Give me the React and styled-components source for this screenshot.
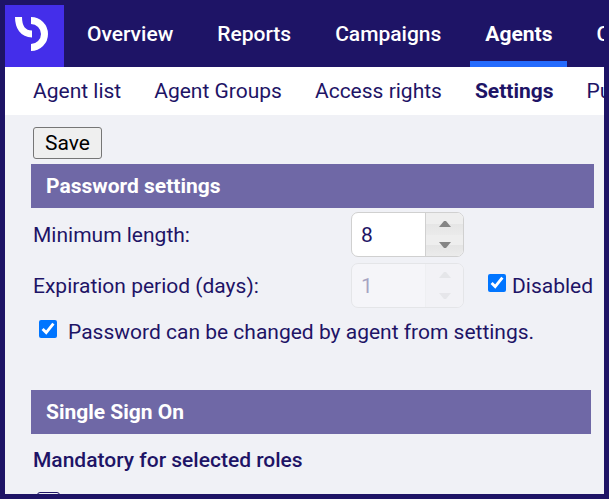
import React, { useState } from 'react';
import styled, { createGlobalStyle, css } from 'styled-components';

const color = {
  navy: '#1e1466',
  violet: '#442eea',
  purple: '#6f68a6',
  blue: '#246bfd',
  page: '#f0f1f6',
  white: '#ffffff',
};

const GlobalStyle = createGlobalStyle`
  * {
    box-sizing: border-box;
  }

  body {
    color: ${color.navy};
    font-family: Roboto, 'Liberation Sans', sans-serif;
    font-size: 21px;
    line-height: 24px;
    margin: 0;
  }
`;

const Frame = styled.div`
  background-color: ${color.page};
  border: 5px solid ${color.navy};
  height: 100vh;
  overflow: hidden;
`;

const Header = styled.header`
  background-color: ${color.navy};
  display: flex;
  overflow: hidden;
`;

const Logo = styled.a`
  background-color: ${color.violet};
  flex: none;
  height: 62px;
  margin-right: 8px;
  width: 59px;

  svg {
    display: block;
  }
`;

const MainNav = styled.nav`
  display: flex;
  gap: 14px;
`;

// prettier-ignore
const MainLink = styled.a`
  border-bottom: 6px solid transparent;
  color: ${color.white};
  font-weight: 500;
  padding: 17px 15px 0;
  text-decoration: none;
  white-space: nowrap;

  ${p => p.$active && css`
    border-color: ${color.blue};
    font-weight: 700;
  `}
`;

const SubNav = styled.nav`
  background-color: ${color.white};
  display: flex;
  gap: 33px;
  overflow: hidden;
  padding: 12px 28px;
`;

const SubLink = styled.a`
  color: ${color.navy};
  font-weight: ${p => (p.$active ? 700 : 400)};
  text-decoration: none;
  white-space: nowrap;
`;

const Content = styled.main`
  padding: 12px 10px 0 26px;
`;

const SaveButton = styled.button`
  background-color: #efefef;
  border: 1px solid #767676;
  border-radius: 3px;
  color: #000;
  display: block;
  font: inherit;
  height: 32px;
  line-height: 24px;
  margin: 0 0 5px 2px;
  padding: 0 11px;
`;

const Section = styled.section`
  margin-bottom: 46px;
  margin-right: ${p => (p.$inset ? 3 : 0)}px;
`;

const SectionTitle = styled.h2`
  background-color: ${color.purple};
  color: ${color.white};
  font-size: 21px;
  font-weight: 700;
  line-height: 24px;
  margin: 0 0 4px;
  padding: 10px 15px;
`;

const Row = styled.div`
  align-items: center;
  display: flex;
  margin-bottom: 6px;
  padding-left: 2px;
`;

const Label = styled.label`
  flex: none;
  width: 318px;
`;

const CheckLabel = styled.label`
  align-items: center;
  display: flex;
  gap: ${p => p.$gap}px;
  white-space: nowrap;
`;

const Checkbox = styled.input.attrs({ type: 'checkbox' })`
  flex: none;
  height: 18px;
  margin: 0 0 6px;
  width: 18px;
`;

const SpinnerBox = styled.div`
  background-color: ${color.white};
  border: 1px solid #d0d0d0;
  border-radius: 7px;
  display: flex;
  flex: none;
  height: 45px;
  margin-right: 24px;
  opacity: ${p => (p.$disabled ? 0.35 : 1)};
  overflow: hidden;
  width: 113px;
`;

const SpinnerInput = styled.input`
  background: none;
  border: 0;
  color: ${color.navy};
  flex: 1;
  font: inherit;
  min-width: 0;
  outline: 0;
  padding: 0 9px;
`;

const SpinnerButtons = styled.div`
  border-left: 1px solid ${p => (p.$disabled ? '#ececec' : '#d0d0d0')};
  display: flex;
  flex: none;
  flex-direction: column;
  width: 38px;
`;

const StepButton = styled.button`
  align-items: center;
  background: linear-gradient(#eeeeee 50%, #e5e5e5 50%, #ebebeb);
  border: 0;
  display: flex;
  flex: 1;
  justify-content: center;
  padding: 0;

  &:disabled {
    background: #f6f6f6;
  }

  &:disabled svg {
    opacity: 0.3;
  }
`;

const PolicyRow = styled.div`
  padding: 6px 0 0 8px;
`;

const Subtitle = styled.h3`
  font-size: 21px;
  font-weight: 500;
  line-height: 24px;
  margin: 14px 0 20px 2px;
`;

const RoleCheckbox = styled.input.attrs({ type: 'checkbox' })`
  appearance: none;
  border: 1px solid ${color.navy};
  border-radius: 3px;
  display: block;
  height: 23px;
  margin: 0 0 0 6px;
  width: 23px;
`;

const mainLinks = ['Overview', 'Reports', 'Campaigns', 'Agents', 'Contacts'];
const subLinks = [
  'Agent list',
  'Agent Groups',
  'Access rights',
  'Settings',
  'Punctuality',
];

const Spinner = ({ id, value, onChange, disabled }) => (
  <SpinnerBox $disabled={disabled}>
    <SpinnerInput
      id={id}
      inputMode="numeric"
      value={value}
      disabled={disabled}
      onChange={e => onChange(Number(e.target.value) || 0)}
    />
    <SpinnerButtons $disabled={disabled}>
      <StepButton
        type="button"
        aria-label="Increase"
        disabled={disabled}
        onClick={() => onChange(value + 1)}
      >
        <svg width="12" height="7" viewBox="0 0 12 7">
          <path d="M0 7L5 1h2l5 6z" fill="#858585" />
        </svg>
      </StepButton>
      <StepButton
        type="button"
        aria-label="Decrease"
        disabled={disabled}
        onClick={() => onChange(Math.max(0, value - 1))}
      >
        <svg width="12" height="7" viewBox="0 0 12 7">
          <path d="M0 0L5 6h2l5-6z" fill="#858585" />
        </svg>
      </StepButton>
    </SpinnerButtons>
  </SpinnerBox>
);

const App = () => {
  const [minLength, setMinLength] = useState(8);
  const [expiration, setExpiration] = useState(1);
  const [noExpiration, setNoExpiration] = useState(true);

  return (
    <>
      <GlobalStyle />
      <Frame>
        <Header>
          <Logo href="#" aria-label="Home">
            <svg width="59" height="62" viewBox="0 0 59 62">
              <g fill="none" stroke={color.white} strokeWidth="7">
                <path d="M13.5 12C13.5 22 18 29 27 29" />
                <path d="M26 15.5a13.5 13.5 0 0 1 0 27" />
              </g>
            </svg>
          </Logo>
          <MainNav>
            {mainLinks.map(name => (
              <MainLink key={name} href="#" $active={name === 'Agents'}>
                {name}
              </MainLink>
            ))}
          </MainNav>
        </Header>
        <SubNav>
          {subLinks.map(name => (
            <SubLink key={name} href="#" $active={name === 'Settings'}>
              {name}
            </SubLink>
          ))}
        </SubNav>
        <Content>
          <SaveButton type="button">Save</SaveButton>
          <Section>
            <SectionTitle>Password settings</SectionTitle>
            <Row>
              <Label htmlFor="min-length">Minimum length:</Label>
              <Spinner
                id="min-length"
                value={minLength}
                onChange={setMinLength}
              />
            </Row>
            <Row>
              <Label htmlFor="expiration">Expiration period (days):</Label>
              <Spinner
                id="expiration"
                value={expiration}
                onChange={setExpiration}
                disabled={noExpiration}
              />
              <CheckLabel $gap={6}>
                <Checkbox
                  checked={noExpiration}
                  onChange={e => setNoExpiration(e.target.checked)}
                />
                Disabled
              </CheckLabel>
            </Row>
            <PolicyRow>
              <CheckLabel $gap={11}>
                <Checkbox defaultChecked />
                Password can be changed by agent from settings.
              </CheckLabel>
            </PolicyRow>
          </Section>
          <Section $inset>
            <SectionTitle>Single Sign On</SectionTitle>
            <Subtitle>Mandatory for selected roles</Subtitle>
            <RoleCheckbox aria-label="Role" />
          </Section>
        </Content>
      </Frame>
    </>
  );
};

export default App;
